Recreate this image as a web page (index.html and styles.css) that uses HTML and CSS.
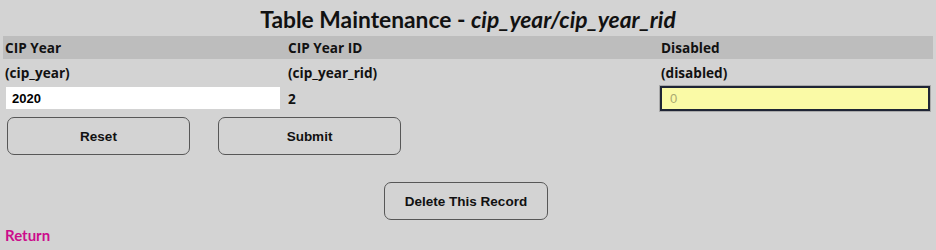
FILE: index.html
```html
<!DOCTYPE html>
<html lang="en">
<head>
    <meta charset="UTF-8">
    <meta name="viewport" content="width=device-width, initial-scale=1.0">
    <title>Table Maintenance</title>
    <link rel="stylesheet" href="styles.css">
</head>
<body>
    <h1 class="title">Table Maintenance - <em>cip_year/cip_year_rid</em></h1>

    <form class="maint">
        <table class="fields">
            <tr class="head">
                <th class="col-a">CIP Year</th>
                <th class="col-b">CIP Year ID</th>
                <th class="col-c">Disabled</th>
            </tr>
            <tr class="names">
                <td>(cip_year)</td>
                <td>(cip_year_rid)</td>
                <td>(disabled)</td>
            </tr>
            <tr class="values">
                <td><input class="text-in" type="text" value="2020"></td>
                <td class="rid">2</td>
                <td><input class="text-in locked" type="text" placeholder="0"></td>
            </tr>
        </table>

        <div class="actions">
            <button type="reset" class="btn">Reset</button>
            <button type="submit" class="btn">Submit</button>
        </div>

        <div class="delete-row">
            <button type="button" class="btn btn-delete">Delete This Record</button>
        </div>
    </form>

    <a class="return" href="#">Return</a>
</body>
</html>
```

FILE: styles.css
```css
body {
    margin: 0;
    background-color: #d3d3d3;
    color: #111;
    font-family: "Open Sans", Lato, sans-serif;
}

.title {
    margin: 0;
    padding-top: 5px;
    height: 31px;
    font-family: Lato, sans-serif;
    font-size: 22.8px;
    font-weight: 700;
    text-align: center;
}

.title em {
    font-style: italic;
}

.fields {
    width: 930px;
    margin-left: 3px;
    border-collapse: collapse;
}

.fields th,
.fields td {
    padding: 0 0 0 2px;
    text-align: left;
    font-size: 13.6px;
    font-weight: 700;
}

.head {
    background-color: #bdbdbd;
    height: 23px;
}

.col-a {
    width: 281px;
}

.col-b {
    width: 371px;
}

.names {
    height: 26px;
}

.values {
    height: 26px;
}

.text-in {
    box-sizing: border-box;
    display: block;
    margin-left: 1px;
    width: 274px;
    height: 22px;
    border: none;
    padding: 0 6px;
    background-color: #fff;
    font-family: "Liberation Sans", Arial, sans-serif;
    font-size: 13px;
    font-weight: 700;
    color: #000;
}

.locked {
    margin-left: -1px;
    width: 270px;
    height: 25px;
    border: 2px solid #1f2535;
    outline: 1px solid #a9a9a9;
    background-color: #fafaa6;
    padding: 0 8px;
    font-weight: 400;
}

.locked::placeholder {
    color: #a9a970;
}

.rid {
    padding-top: 2px;
}

.actions {
    display: flex;
    gap: 28px;
    padding: 6px 0 0 7px;
}

.btn {
    box-sizing: border-box;
    width: 183px;
    height: 38px;
    border: 1.5px solid #575757;
    border-radius: 7px;
    background-color: #d3d3d3;
    color: #111;
    font-family: "Liberation Sans", Arial, sans-serif;
    font-size: 13.5px;
    font-weight: 700;
    cursor: pointer;
}

.delete-row {
    display: flex;
    justify-content: center;
    padding: 27px 4px 0 0;
}

.btn-delete {
    width: 164px;
}

.return {
    display: inline-block;
    margin: 6px 0 0 5px;
    color: #cc0c8c;
    font-family: Lato, sans-serif;
    font-size: 15px;
    font-weight: 700;
    text-decoration: none;
}
```
